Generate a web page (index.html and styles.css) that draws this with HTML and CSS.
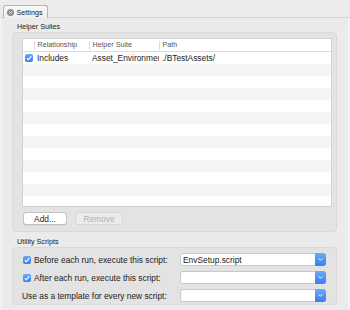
FILE: index.html
```html
<!DOCTYPE html>
<html>
<head>
<meta charset="utf-8">
<link rel="stylesheet" href="styles.css">
</head>
<body>
<div class="window">
  <div class="tabbar">
    <div class="tab">
      <svg class="close" viewBox="0 0 7 7" width="7" height="7"><circle cx="3.5" cy="3.5" r="3.5" fill="#8c8c8c"/><path d="M2.2 2.2L4.8 4.8M4.8 2.2L2.2 4.8" stroke="#ececec" stroke-width="0.9"/></svg>
      <span>Settings</span>
    </div>
  </div>
  <div class="content">
    <div class="group-label">Helper Suites</div>
    <div class="group group-helpers">
      <div class="table">
        <div class="thead">
          <div class="th th-first"></div>
          <div class="th">Relationship</div>
          <div class="th">Helper Suite</div>
          <div class="th">Path</div>
        </div>
        <div class="rows">
          <div class="row">
            <div class="td td-check"><span class="checkbox"><svg viewBox="0 0 8 8" width="8" height="8"><path d="M1.8 4.2L3.4 5.8L6.3 2.2" stroke="#fff" stroke-width="1.2" fill="none"/></svg></span></div>
            <div class="td">Includes</div>
            <div class="td">Asset_Environment</div>
            <div class="td">./BTestAssets/</div>
          </div>
          <div class="row"></div>
          <div class="row"></div>
          <div class="row"></div>
          <div class="row"></div>
          <div class="row"></div>
          <div class="row"></div>
          <div class="row"></div>
          <div class="row"></div>
          <div class="row"></div>
          <div class="row"></div>
          <div class="row"></div>
          <div class="row"></div>
        </div>
      </div>
      <div class="buttons">
        <button class="btn btn-add">Add...</button>
        <button class="btn btn-remove" disabled>Remove</button>
      </div>
    </div>
    <div class="group-label group-label-2">Utility Scripts</div>
    <div class="group group-utility">
      <div class="opt">
        <span class="checkbox"><svg viewBox="0 0 8 8" width="8" height="8"><path d="M1.8 4.2L3.4 5.8L6.3 2.2" stroke="#fff" stroke-width="1.2" fill="none"/></svg></span>
        <span>Before each run, execute this script:</span>
      </div>
      <div class="combo"><span class="combo-text">EnvSetup.script</span><span class="combo-arrow"><svg viewBox="0 0 11 13" width="11" height="13"><path d="M3.6 5.4L5.5 7.3L7.4 5.4" stroke="#fff" stroke-width="1" fill="none"/></svg></span></div>
      <div class="opt">
        <span class="checkbox"><svg viewBox="0 0 8 8" width="8" height="8"><path d="M1.8 4.2L3.4 5.8L6.3 2.2" stroke="#fff" stroke-width="1.2" fill="none"/></svg></span>
        <span>After each run, execute this script:</span>
      </div>
      <div class="combo"><span class="combo-text"></span><span class="combo-arrow"><svg viewBox="0 0 11 13" width="11" height="13"><path d="M3.6 5.4L5.5 7.3L7.4 5.4" stroke="#fff" stroke-width="1" fill="none"/></svg></span></div>
      <div class="opt opt-plain">
        <span>Use as a template for every new script:</span>
      </div>
      <div class="combo"><span class="combo-text"></span><span class="combo-arrow"><svg viewBox="0 0 11 13" width="11" height="13"><path d="M3.6 5.4L5.5 7.3L7.4 5.4" stroke="#fff" stroke-width="1" fill="none"/></svg></span></div>
    </div>
  </div>
</div>
</body>
</html>
```
FILE: styles.css
```css
* { box-sizing: border-box; }
body {
  margin: 0;
  width: 350px;
  height: 310px;
  overflow: hidden;
  background: #f3f3f3;
  font-family: "Liberation Sans", Arial, sans-serif;
  font-size: 8.4px;
  color: #222;
}
.window {
  display: flex;
  flex-direction: column;
  height: 310px;
}
.tabbar {
  height: 18px;
  padding: 5px 0 0 3px;
  background: #ececec;
  border-bottom: 1px solid #d4d4d4;
  display: flex;
  align-items: flex-start;
}
.tab {
  width: 45px;
  height: 13px;
  border: 1px solid #b3b3b3;
  border-bottom: none;
  border-radius: 3px 3px 0 0;
  background: linear-gradient(#f8f8f8, #eeeeee);
  display: flex;
  align-items: center;
  gap: 2.5px;
  padding-left: 3px;
  font-size: 7.2px;
  color: #1a1a1a;
}
.close { display: block; flex: none; }
.content {
  flex: 1;
  margin: 0 2px;
  background: #ebebeb;
  padding: 0 11px 0 10px;
}
.group-label {
  padding: 3px 0 0 5px;
  line-height: 11px;
  font-size: 7.2px;
  color: #1a1a1a;
}
.group-label-2 { padding-top: 4px; }
.group {
  background: #e3e3e3;
  border: 1px solid #d9d9d9;
  border-radius: 4px;
}
.group-helpers {
  height: 200px;
  padding: 5px 4px 6px 9px;
  display: flex;
  flex-direction: column;
}
.table {
  flex: 1;
  background: #fff;
  border: 1px solid #d2d2d2;
  overflow: hidden;
}
.thead, .row {
  display: grid;
  grid-template-columns: 11px 55px 70px 1fr;
}
.thead {
  height: 13px;
  border-bottom: 1px solid #dcdcdc;
}
.th {
  line-height: 12px;
  padding-left: 3.5px;
  font-size: 7.2px;
  color: #555;
  white-space: nowrap;
  background: linear-gradient(#dcdcdc, #dcdcdc) no-repeat 0 2px / 1px 9px;
}
.th-first { background: none; }
.row {
  height: 12px;
}
.row:nth-child(even) { background: #f4f4f4; }
.td {
  line-height: 12px;
  padding-left: 3px;
  white-space: nowrap;
  overflow: hidden;
}
.td-check {
  padding-left: 2px;
  display: flex;
  align-items: center;
}
.checkbox {
  width: 8px;
  height: 8px;
  flex: none;
  border-radius: 2px;
  background: linear-gradient(#66a9fa, #2f80f2);
  display: block;
}
.checkbox svg { display: block; }
.buttons {
  margin-top: 5.5px;
  display: flex;
  gap: 8px;
  padding-left: 1px;
}
.btn {
  height: 13px;
  padding: 0;
  font-family: inherit;
  font-size: 8.4px;
  border-radius: 3px;
}
.btn-add {
  width: 44px;
  background: #fff;
  color: #222;
  border: 1px solid #c2c2c2;
  box-shadow: 0 0.5px 0 rgba(0,0,0,0.12);
}
.btn-remove {
  width: 48px;
  background: #ebebeb;
  color: #b2b2b2;
  border: 1px solid #d6d6d6;
}
.group-utility {
  height: 58px;
  padding: 5px 10px 0 9px;
  display: grid;
  grid-template-columns: 1fr 146px;
  grid-auto-rows: 13px;
  row-gap: 5px;
  align-items: center;
}
.opt {
  display: flex;
  align-items: center;
  gap: 3px;
  padding-left: 1px;
  white-space: nowrap;
}
.opt-plain { padding-left: 0; }
.combo {
  height: 13px;
  background: #fff;
  border: 1px solid #c9c9c9;
  border-radius: 3px;
  display: flex;
  align-items: center;
}
.combo-text {
  flex: 1;
  padding-left: 2px;
  white-space: nowrap;
}
.combo-arrow {
  width: 11px;
  height: 13px;
  margin: -1px -1px -1px 0;
  background: linear-gradient(#6aaafa, #3380f3);
  border-radius: 0 3px 3px 0;
}
.combo-arrow svg { display: block; }
```
